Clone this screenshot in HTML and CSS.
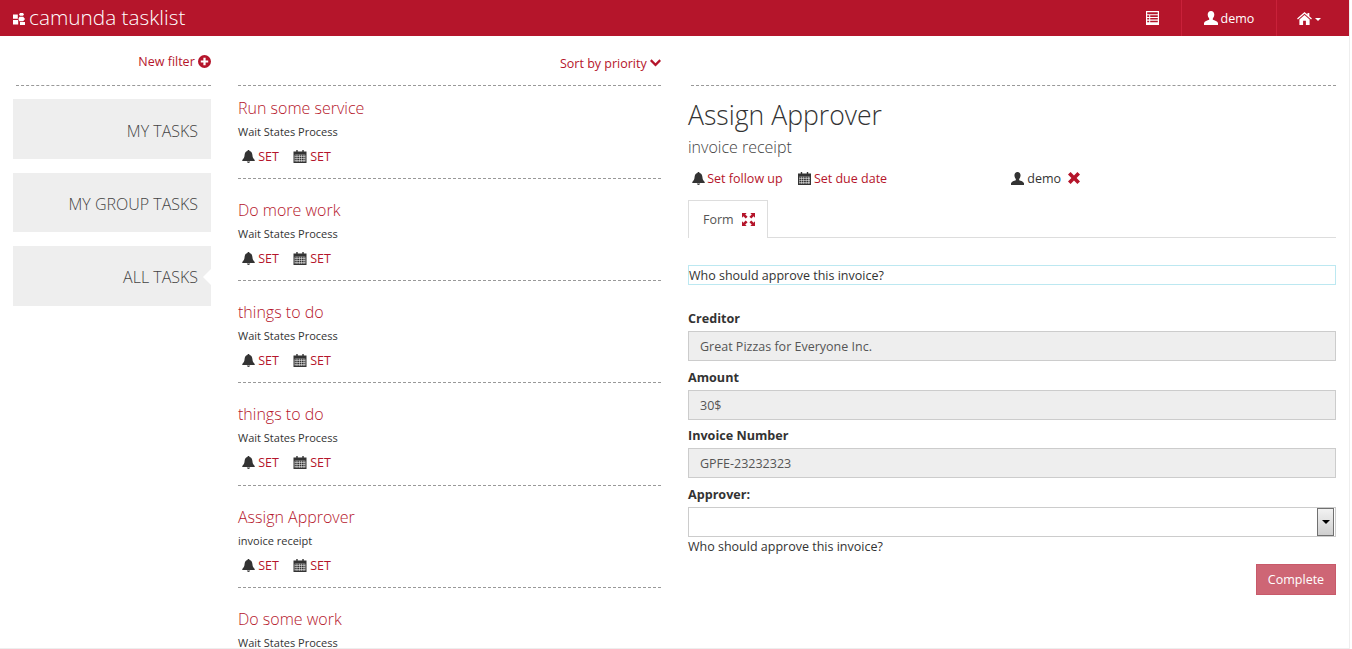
FILE: index.html
```html
<!DOCTYPE html>
<html lang="en">
<head>
    <meta charset="UTF-8">
    <meta name="viewport" content="width=device-width, initial-scale=1.0">
    <title>camunda tasklist</title>
    <link rel="stylesheet" href="styles.css">
</head>
<body>
    <svg class="sprite" width="0" height="0">
        <symbol id="i-bell" viewBox="0 0 14 14"><path d="M7 0c.7 0 1.100.5 1.100 1.100 2.300.5 2.900 2.400 3.100 4.400.2 2.300.7 3.800 2.500 5.200v1.100H.3v-1.100c1.800-1.400 2.300-2.900 2.500-5.200.2-2 .8-3.900 3.100-4.400C5.900.5 6.300 0 7 0zM5.200 12.500h3.600C8.600 13.500 7.900 14 7 14s-1.600-.5-1.800-1.500z"/></symbol>
        <symbol id="i-cal" viewBox="0 0 14 14"><path fill-rule="evenodd" d="M3 0h1.500v1.500h5V0H11v1.500h3V14H0V1.500h3zM1.300 5.200v7.500h11.400V5.200zM2 6h10v6H2z"/><path d="M1.300 5.200h11.400v7.500H1.300z" opacity=".65"/><path fill="#fff" d="M1.300 7h11.400v.5H1.300zM1.300 9h11.400v.5H1.300zM1.300 11h11.400v.5H1.300zM3.500 5.200H4v7.500h-.5zM6 5.200h.5v7.500H6zM8.500 5.200H9v7.500h-.5zM11 5.200h.5v7.500H11z"/></symbol>
        <symbol id="i-user" viewBox="0 0 14 14"><path d="M7 0c2 0 3.300 1.500 3.300 3.600 0 1.500-.6 3-1.500 3.900v1.300c1.800.6 4.700 1.400 5.200 3.200v2H0v-2c.5-1.800 3.400-2.600 5.200-3.200V7.500C4.300 6.600 3.700 5.100 3.700 3.600 3.700 1.500 5 0 7 0z"/></symbol>
        <symbol id="i-home" viewBox="0 0 16 14"><path d="M8 0l3.200 2.800V1h2v3.500L16 7l-.9 1L8 1.900.9 8 0 7zM8 3.200l5.500 4.800v6H9.500V9.500h-3V14H2.500V8z"/></symbol>
        <symbol id="i-list" viewBox="0 0 13 14"><path fill-rule="evenodd" d="M0 0h13v14H0zM1.200 1.200v2h10.600v-2zM1.200 4.300v1.600h2V4.300zm3 0v1.600h7.600V4.300zM1.200 7v1.600h2V7zm3 0v1.600h7.600V7zM1.200 9.700v1.600h2V9.700zm3 0v1.600h7.600V9.700z"/></symbol>
        <symbol id="i-plus" viewBox="0 0 14 14"><path fill-rule="evenodd" d="M7 0a7 7 0 1 1 0 14A7 7 0 0 1 7 0zM5.800 3v2.800H3v2.400h2.800V11h2.400V8.200H11V5.800H8.200V3z"/></symbol>
        <symbol id="i-chev" viewBox="0 0 12 8"><path d="M1.700 0L6 4.300 10.300 0 12 1.700 6 7.700 0 1.700z"/></symbol>
        <symbol id="i-x" viewBox="0 0 12 12"><path d="M2.600 0L6 3.400 9.400 0 12 2.600 8.600 6 12 9.400 9.400 12 6 8.600 2.600 12 0 9.400 3.400 6 0 2.600z"/></symbol>
        <symbol id="i-expand" viewBox="0 0 14 14"><path d="M0 0h5L3.500 1.500 6 4 4 6 1.500 3.500 0 5zM14 0v5L12.500 3.500 10 6 8 4l2.500-2.500L9 0zM0 14V9l1.500 1.500L4 8l2 2-2.500 2.500L5 14zM14 14H9l1.500-1.500L8 10l2-2 2.500 2.500L14 9z"/></symbol>
        <symbol id="i-logo" viewBox="0 0 12 12"><path d="M0 1.500h4.800v4.200H0zM7 0h3l1 1.400L10 2.800H7L6 1.400zM6.500 3.800h3.700L12 6l-1.800 2.200H6.500L5.300 6zM0 7h5.200v4.500H0zM7 9h5v3H7z"/></symbol>
    </svg>

    <div class="page">
        <header class="navbar">
            <div class="brand">
                <svg class="brand-mark"><use href="#i-logo"/></svg>
                <span class="brand-name">camunda tasklist</span>
            </div>
            <nav class="nav-items">
                <div class="nav-item nav-list"><svg class="ic-list"><use href="#i-list"/></svg></div>
                <div class="nav-item nav-user"><svg class="ic-nav"><use href="#i-user"/></svg> demo</div>
                <div class="nav-item nav-home"><svg class="ic-home"><use href="#i-home"/></svg><span class="caret"></span></div>
            </nav>
        </header>

        <main class="columns">
            <aside class="filters">
                <div class="col-head"><a class="link">New filter <svg class="ic"><use href="#i-plus"/></svg></a></div>
                <div class="filter">MY TASKS</div>
                <div class="filter">MY GROUP TASKS</div>
                <div class="filter active">ALL TASKS</div>
            </aside>

            <section class="tasks">
                <div class="col-head sort"><a class="link">Sort by priority <svg class="ic-chev"><use href="#i-chev"/></svg></a></div>
                <div class="task first">
                    <div class="task-name">Run some service</div>
                    <div class="task-proc">Wait States Process</div>
                    <div class="task-set"><span><svg class="ic dark"><use href="#i-bell"/></svg> SET</span><span><svg class="ic-cal dark"><use href="#i-cal"/></svg> SET</span></div>
                </div>
                <div class="task">
                    <div class="task-name">Do more work</div>
                    <div class="task-proc">Wait States Process</div>
                    <div class="task-set"><span><svg class="ic dark"><use href="#i-bell"/></svg> SET</span><span><svg class="ic-cal dark"><use href="#i-cal"/></svg> SET</span></div>
                </div>
                <div class="task">
                    <div class="task-name">things to do</div>
                    <div class="task-proc">Wait States Process</div>
                    <div class="task-set"><span><svg class="ic dark"><use href="#i-bell"/></svg> SET</span><span><svg class="ic-cal dark"><use href="#i-cal"/></svg> SET</span></div>
                </div>
                <div class="task">
                    <div class="task-name">things to do</div>
                    <div class="task-proc">Wait States Process</div>
                    <div class="task-set"><span><svg class="ic dark"><use href="#i-bell"/></svg> SET</span><span><svg class="ic-cal dark"><use href="#i-cal"/></svg> SET</span></div>
                </div>
                <div class="task">
                    <div class="task-name">Assign Approver</div>
                    <div class="task-proc">invoice receipt</div>
                    <div class="task-set"><span><svg class="ic dark"><use href="#i-bell"/></svg> SET</span><span><svg class="ic-cal dark"><use href="#i-cal"/></svg> SET</span></div>
                </div>
                <div class="task">
                    <div class="task-name">Do some work</div>
                    <div class="task-proc">Wait States Process</div>
                </div>
            </section>

            <section class="detail">
                <div class="detail-rule"></div>
                <h1>Assign Approver</h1>
                <div class="subtitle">invoice receipt</div>
                <div class="meta">
                    <span class="meta-link"><svg class="ic dark meta-bell"><use href="#i-bell"/></svg> Set follow up</span>
                    <span class="meta-link"><svg class="ic dark"><use href="#i-cal"/></svg> Set due date</span>
                    <span class="assignee"><svg class="ic dark"><use href="#i-user"/></svg> demo <svg class="ic-x"><use href="#i-x"/></svg></span>
                </div>
                <div class="tabs">
                    <div class="tab">Form <svg class="ic-expand"><use href="#i-expand"/></svg></div>
                </div>
                <div class="notice">Who should approve this invoice?</div>
                <form class="task-form">
                    <label>Creditor</label>
                    <div class="field">Great Pizzas for Everyone Inc.</div>
                    <label>Amount</label>
                    <div class="field">30$</div>
                    <label>Invoice Number</label>
                    <div class="field">GPFE-23232323</div>
                    <label>Approver:</label>
                    <div class="select"><span class="select-btn"><span class="select-arrow"></span></span></div>
                    <div class="help">Who should approve this invoice?</div>
                    <div class="actions"><button type="button">Complete</button></div>
                </form>
            </section>
        </main>
    </div>
</body>
</html>
```

FILE: styles.css
```css
* { box-sizing: border-box; }
html, body { margin: 0; height: 100%; overflow: hidden; }
body { font-family: "Open Sans", sans-serif; font-size: 12.5px; color: #333; background: #fff; }
.sprite { position: absolute; }
svg { fill: currentColor; }

.page { width: 1350px; height: 649px; border-right: 1px solid #eee; border-bottom: 1px solid #eee; overflow: hidden; }

.navbar { height: 36px; background: #b5152b; color: #fff; display: flex; justify-content: space-between; width: 1352px; }
.brand { display: flex; align-items: center; padding-left: 13px; font-weight: 300; font-size: 20.8px; gap: 4px; }
.brand-mark { width: 12px; height: 12px; margin-top: 1px; }
.brand-name { margin-top: -3px; }
.nav-items { display: flex; margin-right: 14px; }
.nav-item { display: flex; align-items: center; justify-content: center; height: 36px; border-left: 1px solid #c9213a; font-size: 12.5px; }
.nav-list { border-left: 0; width: 60px; padding-left: 3px; }
.nav-user { width: 95px; gap: 3px; }
.nav-home { width: 62px; gap: 3px; padding-left: 2px; }
.ic-list { width: 13px; height: 14px; }
.ic-nav { width: 14px; height: 14px; }
.ic-home { width: 15px; height: 13px; }
.caret { width: 0; height: 0; border: 3px solid transparent; border-top-color: #fff; border-bottom: 0; margin-top: 2px; }

.ic { width: 13px; height: 13px; vertical-align: -2px; }
.ic-cal { width: 14px; height: 13px; vertical-align: -2px; }
.dark { color: #333; }
.meta-bell { margin-right: -1px; }
.ic-chev { width: 11px; height: 8px; vertical-align: 1px; }
.ic-x { width: 12px; height: 12px; color: #b5152b; margin-left: 4px; vertical-align: -1px; }
.ic-expand { width: 13px; height: 13px; color: #b5152b; margin-left: 5px; vertical-align: -2px; }

.columns { display: flex; align-items: flex-start; }
.link { color: #b5152b; }

.filters { width: 198px; margin-left: 13px; }
.col-head { height: 50px; margin-left: 3px; border-bottom: 1px dashed #999; text-align: right; padding-top: 17px; }
.filter { height: 60px; margin-top: 14px; padding: 2px 13px 0 0; background: #eee; color: #444; font-weight: 300; font-size: 16px; display: flex; align-items: center; justify-content: flex-end; }
.filters .filter:nth-child(2) { margin-top: 13px; padding-top: 3px; }
.filters .filter:nth-child(3) { height: 59px; }
.filter.active { position: relative; }
.filter.active::after { content: ""; position: absolute; right: 0; top: 23px; border: 8px solid transparent; border-right-color: #fff; border-left: 0; }

.tasks { width: 423px; margin-left: 27px; }
.sort { margin-left: 0; padding-top: 19px; }
.task { height: 102.2px; padding: 18px 0 0; border-bottom: 1px dashed #999; }
.task.first { height: 93px; padding-top: 9px; }
.task:last-child { border-bottom: 0; }
.task-name { color: #b5152b; font-weight: 300; font-size: 16px; line-height: 26px; }
.task-proc { font-size: 11px; line-height: 15px; margin-top: 3px; color: #333; }
.task-set { display: flex; gap: 14px; margin-top: 9px; padding-left: 4px; font-size: 12.5px; line-height: 18px; color: #b5152b; }

.detail { width: 648px; margin-left: 27px; }
.detail-rule { margin: 49px 0 0 3px; border-top: 1px dashed #999; }
h1 { margin: 11px 0 0; font-weight: 300; font-size: 26.6px; line-height: 36px; color: #333; }
.subtitle { font-weight: 300; font-size: 16px; line-height: 22px; margin-top: 3px; color: #444; }
.meta { display: flex; margin-top: 12px; padding-left: 4px; line-height: 18px; color: #b5152b; }
.meta-link { margin-right: 15px; }
.assignee { margin-left: 109px; color: #333; }

.tabs { margin-top: 12px; height: 38px; border-bottom: 1px solid #ddd; }
.tab { display: inline-block; height: 38px; padding: 0 12px 0 14px; line-height: 37px; border: 1px solid #ddd; border-bottom: 0; background: #fff; color: #555; }

.notice { margin-top: 27px; height: 20px; line-height: 20px; border: 1px solid #bce8f1; color: #333; }

.task-form { margin-top: 23px; }
.task-form label { display: block; font-weight: 700; font-size: 12.6px; line-height: 22px; height: 20px; color: #333; margin: 5.5px 0 3px; }
.task-form label:first-child { margin-top: 0; }
.field { height: 30px; line-height: 30px; padding: 0 11px; border: 1px solid #ccc; background: #eee; color: #555; }
.select { height: 30px; border: 1px solid #ccc; display: flex; justify-content: flex-end; padding: 0 1px; align-items: center; }
.select-btn { width: 17px; height: 28px; border: 1px solid #707070; background: linear-gradient(#f2f2f2, #cfcfcf); display: flex; align-items: center; justify-content: center; }
.select-arrow { width: 0; height: 0; border: 4px solid transparent; border-top-color: #000; border-bottom: 0; }
.help { line-height: 18px; margin-top: 1px; color: #333; }
.actions { display: flex; justify-content: flex-end; margin-top: 8px; }
button { width: 80px; height: 31px; font-family: inherit; font-size: 12.5px; color: #fff; background: #ce6675; border: 1px solid #c85a6a; border-radius: 0; padding: 0; }
```
